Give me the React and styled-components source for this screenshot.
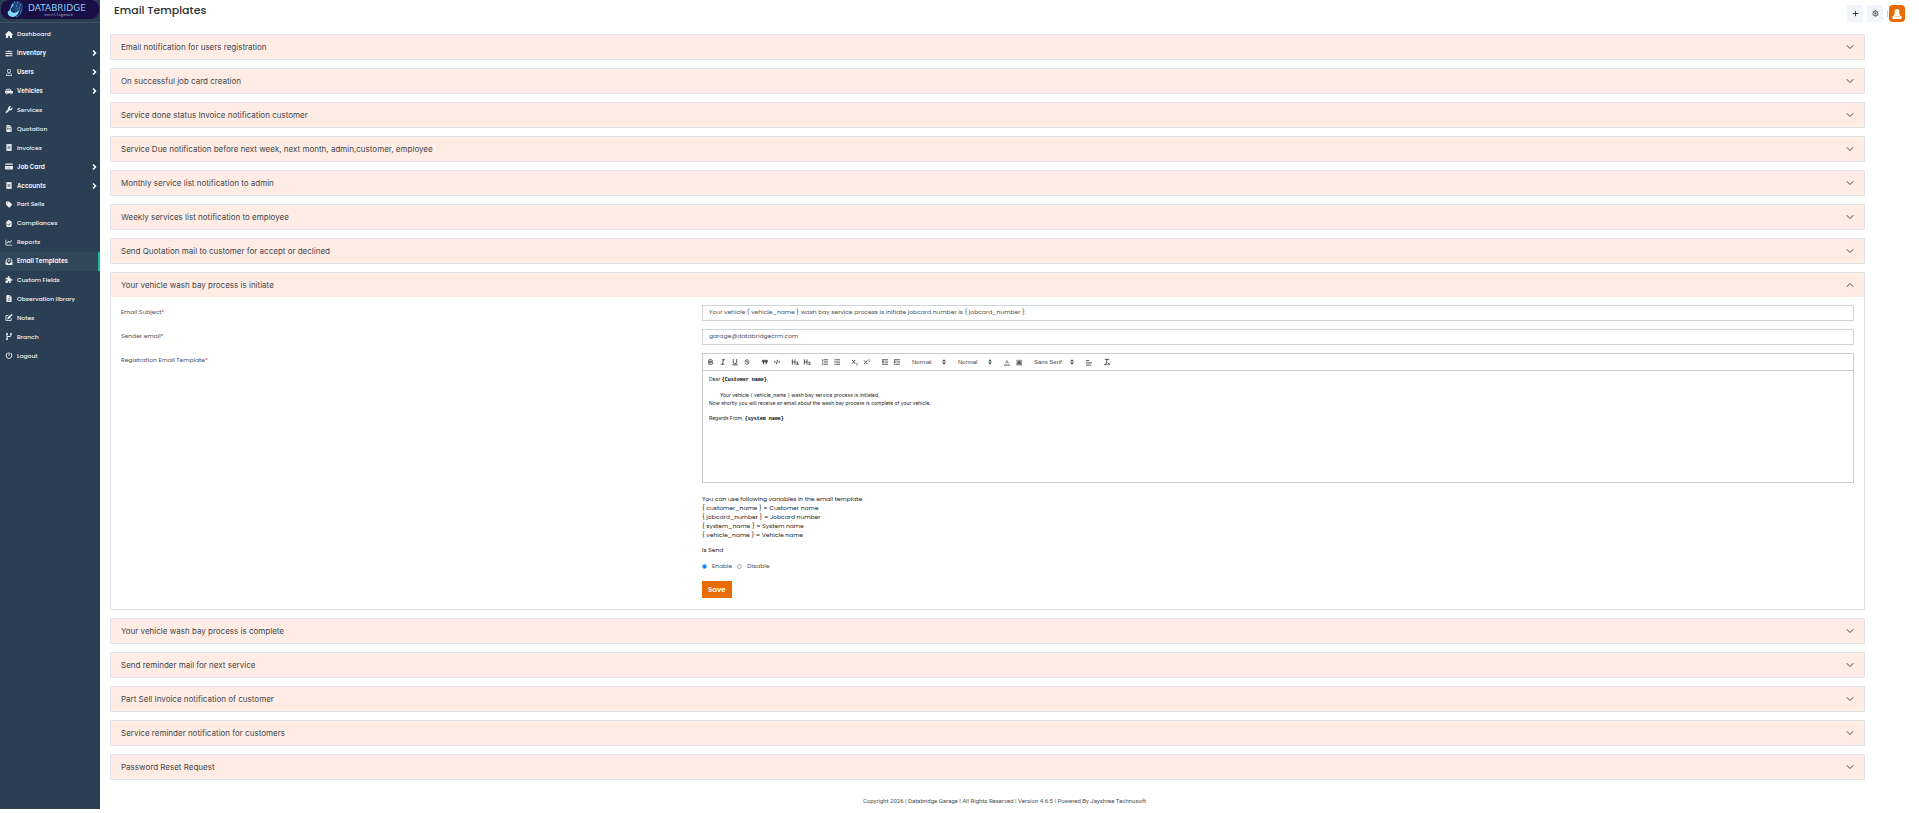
import React from "react";
import styled, { createGlobalStyle } from "styled-components";
import {
    FaHouse, FaCarSide, FaWrench, FaFileInvoice, FaReceipt, FaCreditCard, FaTag,
    FaClipboardCheck, FaChartLine, FaEnvelopeOpenText, FaPuzzlePiece, FaFileLines,
    FaPenToSquare, FaCodeBranch, FaPowerOff, FaPlus
} from "react-icons/fa6";
import { FaRegUser, FaSlidersH } from "react-icons/fa";

const colors = {
    sidebar: "#2a3f54",
    sidebarActive: "#31485a",
    teal: "#1abb9c",
    peach: "#ffede5",
    border: "#dee2e6",
    inputBorder: "#ced4da",
    editorBorder: "#cccccc",
    orange: "#ea6b00",
    text: "#495057"
};

const GlobalStyle = createGlobalStyle`
    * {
        box-sizing: border-box;
    }
    body {
        margin: 0;
        background: #fff;
        color: ${colors.text};
        font-family: Poppins, Inter, "Open Sans", sans-serif;
        font-size: 6px;
        line-height: 8px;
    }
    button, input, select {
        font: inherit;
        color: inherit;
    }
`;

const Page = styled.div`
    display: flex;
    margin-bottom: 4px;
`;

const Sidebar = styled.aside`
    width: 100px;
    flex: none;
    background: ${colors.sidebar};
`;

const Brand = styled.a`
    display: block;
    height: 23px;
    border-bottom: 1px solid #3f5265;
    svg {
        display: block;
    }
`;

const Menu = styled.ul`
    list-style: none;
    margin: 2px 0 0;
    padding: 0;
    display: grid;
    grid-auto-rows: 1fr;
    height: 340px;
`;

const MenuLink = styled.a`
    display: flex;
    align-items: center;
    gap: 4px;
    height: 100%;
    padding: 0 1px 0 5px;
    color: #f0f3f6;
    background: ${({ $active }) => ($active ? colors.sidebarActive : "transparent")};
    border-right: 2px solid ${({ $active }) => ($active ? colors.teal : "transparent")};
    font-weight: ${({ $strong }) => ($strong ? 600 : 500)};
    text-decoration: none;
    svg {
        width: 8px;
        height: 7px;
        flex: none;
    }
    span {
        flex: 1;
        white-space: nowrap;
    }
`;

const Caret = styled.svg`
    && {
        width: 6px;
        height: 6px;
    }
    fill: none;
    stroke: #fff;
    stroke-width: 3;
`;

const Main = styled.div`
    flex: 1;
    min-width: 0;
    padding: 0 54px 0 10px;
`;

const TopBar = styled.header`
    display: flex;
    justify-content: space-between;
    height: 34px;
    margin-right: -40px;
    padding-left: 4px;
`;

const Title = styled.h1`
    margin: 3px 0 0;
    color: #2b2f33;
    font-size: 11px;
    font-weight: 500;
    line-height: 14px;
`;

const Actions = styled.div`
    display: flex;
    align-items: flex-start;
    gap: 4px;
    padding-top: 5px;
`;

const IconButton = styled.button`
    display: flex;
    align-items: center;
    justify-content: center;
    width: 16px;
    height: 17px;
    padding: 0;
    border: 0;
    background: #f2f5fa;
    color: #333;
    svg {
        width: 7px;
        height: 7px;
    }
`;

const Profile = styled.div`
    display: flex;
    align-items: center;
    gap: 1px;
`;

const Divider = styled.span`
    width: 1px;
    height: 6px;
    background: #ccc;
`;

const ProfileButton = styled(IconButton)`
    border-radius: 4px;
    background: ${colors.orange};
    svg {
        width: 12px;
        height: 12px;
    }
`;

const Accordion = styled.main`
    display: flex;
    flex-direction: column;
    gap: 8px;
`;

const Card = styled.section`
    border: 1px solid ${colors.border};
    border-radius: 1px;
`;

const CardHeader = styled.button`
    display: flex;
    align-items: center;
    justify-content: space-between;
    width: 100%;
    height: 24px;
    padding: 0 10px;
    border: 0;
    background: ${colors.peach};
    color: #3f454b;
    font-family: Inter, "Open Sans", sans-serif;
    font-size: 8px;
    text-align: left;
    svg {
        width: 8px;
        height: 8px;
        transform: ${({ $open }) => ($open ? "rotate(180deg)" : "none")};
    }
`;

const CardBody = styled.form`
    display: grid;
    gap: 8px;
    padding: 8px 10px 11px;
`;

const FormRow = styled.div`
    display: grid;
    grid-template-columns: 1fr 2fr;
    column-gap: 5px;
    align-items: start;
`;

const Label = styled.label`
    padding-top: 3px;
    i {
        color: #e05050;
        font-style: normal;
    }
`;

const TextInput = styled.input`
    width: 100%;
    height: 16px;
    padding: 0 6px 1px;
    border: 1px solid ${colors.inputBorder};
    border-radius: 0;
    background: #fff;
    outline: none;
`;

const Toolbar = styled.div`
    display: flex;
    align-items: center;
    gap: 6px;
    height: 18px;
    padding: 0 2px;
    border: 1px solid ${colors.editorBorder};
    color: #444;
`;

const ToolGroup = styled.div`
    display: flex;
`;

const ToolButton = styled.button`
    display: flex;
    align-items: center;
    justify-content: center;
    width: 12px;
    height: 12px;
    padding: 0;
    border: 0;
    background: none;
`;

const Glyph = styled.svg`
    display: block;
    width: 8px;
    height: 8px;
    flex: none;
    fill: none;
    stroke: currentColor;
    stroke-width: 2;
    stroke-linecap: round;
    stroke-linejoin: round;
    .f {
        fill: currentColor;
        stroke: none;
    }
    .thin {
        stroke-width: 1;
    }
`;

const Picker = styled.span`
    display: flex;
    align-items: center;
    width: ${({ $wide }) => ($wide ? "46px" : "40px")};
    padding: 0 1px 0 3px;
    select {
        flex: 1;
        min-width: 0;
        padding: 0;
        border: 0;
        background: none;
        appearance: none;
        font-family: "Liberation Sans", Arial, sans-serif;
        font-weight: 500;
    }
`;

const Editor = styled.div`
    height: 112px;
    padding: 4px 6px;
    border: 1px solid ${colors.editorBorder};
    border-top: 0;
    color: #222;
    font-family: Inter, "Liberation Sans", sans-serif;
    font-size: 5px;
    line-height: 8px;
    outline: none;
    p {
        margin: 0 0 7px;
    }
    strong {
        color: #000;
        font-family: "Liberation Mono", monospace;
    }
`;

const Indent = styled.span`
    padding-left: 11px;
`;

const Variables = styled.div`
    margin-top: 12px;
    color: #212529;
    line-height: 9px;
`;

const SendField = styled.fieldset`
    margin: 6px 0 0;
    padding: 0;
    border: 0;
    legend {
        padding: 0;
        color: #212529;
    }
`;

const Radios = styled.div`
    display: flex;
    gap: 5px;
    padding-top: 8px;
    label {
        display: flex;
        align-items: center;
        gap: 5px;
    }
`;

const Radio = styled.input`
    width: 5px;
    height: 5px;
    margin: 0;
    appearance: none;
    border: 1px solid #aaa;
    border-radius: 50%;
    &:checked {
        border-color: #7ab8f5;
        background: #0075ff;
    }
`;

const SaveButton = styled.button`
    display: block;
    height: 17px;
    margin-top: 11px;
    padding: 0 6px;
    border: 0;
    background: ${colors.orange};
    color: #fff;
    font-size: 7px;
    font-weight: 600;
`;

const Footer = styled.footer`
    padding: 17px 0 4px;
    margin: 0 -44px 0 -10px;
    font-family: Roboto, sans-serif;
    text-align: center;
`;

const menu = [
    { name: "Dashboard", icon: FaHouse },
    { name: "Inventory", icon: FaSlidersH, nested: true },
    { name: "Users", icon: FaRegUser, nested: true },
    { name: "Vehicles", icon: FaCarSide, nested: true },
    { name: "Services", icon: FaWrench },
    { name: "Quotation", icon: FaFileInvoice },
    { name: "Invoices", icon: FaReceipt },
    { name: "Job Card", icon: FaCreditCard, nested: true },
    { name: "Accounts", icon: FaReceipt, nested: true },
    { name: "Part Sells", icon: FaTag },
    { name: "Compliances", icon: FaClipboardCheck },
    { name: "Reports", icon: FaChartLine },
    { name: "Email Templates", icon: FaEnvelopeOpenText, active: true },
    { name: "Custom Fields", icon: FaPuzzlePiece },
    { name: "Observation library", icon: FaFileLines },
    { name: "Notes", icon: FaPenToSquare },
    { name: "Branch", icon: FaCodeBranch },
    { name: "Logout", icon: FaPowerOff }
];

const before = [
    "Email notification for users registration",
    "On successful job card creation",
    "Service done status Invoice notification customer",
    "Service Due notification before next week, next month, admin,customer, employee",
    "Monthly service list notification to admin",
    "Weekly services list notification to employee",
    "Send Quotation mail to customer for accept or declined"
];

const after = [
    "Your vehicle wash bay process is complete",
    "Send reminder mail for next service",
    "Part Sell Invoice notification of customer",
    "Service reminder notification for customers",
    "Password Reset Request"
];

const glyphs = {
    bold: <><path d="M5,4H9.5A2.5,2.5,0,0,1,12,6.5v0A2.5,2.5,0,0,1,9.5,9H5Z" /><path d="M5,9h5.5A2.5,2.5,0,0,1,13,11.5v0A2.5,2.5,0,0,1,10.5,14H5Z" /></>,
    italic: <path d="M7 4h6M5 14h6M8 14l2-10" />,
    underline: <path d="M5,3V9a4.012,4.012,0,0,0,4,4H9a4.012,4.012,0,0,0,4-4V3M3.5 15.5h11" />,
    strike: <><path className="thin" d="M15.5 8.5h-13" /><path d="M12.5 5.5C11.5 3.5 6 3 5.5 6c0 2 2 2 3.5 2.7c3 .8 3.5 1.5 3.5 3c0 3-6 3-7.5.5" /></>,
    quote: <><path className="f" d="M4 5h4v4l-2 5H4l1-4H4zM10 5h4v4l-2 5h-2l1-4h-1z" /><path d="M4 5h3v4H4zM11 5h3v4h-3z" /></>,
    code: <path d="M5 7 3 9l2 2M13 7l2 2-2 2M10 5 8 13" />,
    h1: <><path d="M3 4v10M9 4v10M3 9h6" /><path d="M13 9.5l1.5-1V14M12.5 14h4" /></>,
    h2: <><path d="M3 4v10M9 4v10M3 9h6" /><path d="M12.5 9.5c1-2 4-1 3 1l-3 3.5h4" /></>,
    ordered: <><path d="M7 4h8M7 9h8M7 14h8" /><path className="thin" d="M2.5 3.5 3.5 3v3M2.5 6h2M2.5 9h2l-2 2.5h2M2.5 13.5h2v2h-2" /></>,
    bullet: <path d="M6 4h9M6 9h9M6 14h9M3 4h0M3 9h0M3 14h0" />,
    sub: <><path d="M3 5l6 7M9 5l-6 7" /><path className="thin" d="M12 12c1-1.5 3-1 2.5.5L12 15.5h3" /></>,
    sup: <><path d="M3 6l6 7M9 6l-6 7" /><path className="thin" d="M12 4c1-1.5 3-1 2.5.5L12 7.5h3" /></>,
    outdent: <path d="M3 14h12M3 4h12M9 9h6M5 7v4L3 9z" />,
    indent: <path d="M3 14h12M3 4h12M9 9h6M3 7v4l2-2z" />,
    color: <><path className="thin" d="M6 12 9 5l3 7M7 10h4" /><path d="M3 16h12" /></>,
    background: <><path className="f" opacity="0.5" d="M3 4h13v13H3z" /><path d="M6 14l3.500-7L13 14M7 12h5" /></>,
    align: <path d="M3 11h12M3 16h10M3 6h6" />,
    clean: <path d="M5 3h8M9 3 7 13M3 15h5M11 11l4 4M15 11l-4 4" />,
    arrows: <path className="f" d="M5 8h8L9 3zM5 10h8l-4 5z" />
};

const Tool = ({ name }) => (
    <ToolButton type="button" aria-label={name}>
        <Glyph viewBox="0 0 18 18">{glyphs[name]}</Glyph>
    </ToolButton>
);

const Tools = ({ names }) => (
    <ToolGroup>
        {names.map((name) => <Tool key={name} name={name} />)}
    </ToolGroup>
);

const FormatPicker = ({ label, value, wide }) => (
    <Picker $wide={wide}>
        <select aria-label={label} defaultValue={value}>
            <option>{value}</option>
        </select>
        <Glyph viewBox="0 0 18 18">{glyphs.arrows}</Glyph>
    </Picker>
);

const Chevron = () => (
    <svg viewBox="0 0 16 16" fill="none" stroke="#444" strokeWidth="2" strokeLinecap="round" strokeLinejoin="round">
        <path d="M2 5l6 6 6-6" />
    </svg>
);

const GearIcon = () => (
    <svg viewBox="0 0 14 14" fill="none" stroke="#666" strokeWidth="2">
        <circle cx="7" cy="7" r="5" />
        <circle cx="7" cy="7" r="1" />
        <path d="M7 0v14M1 3.500l12 7M13 3.500l-12 7" strokeWidth="1" />
    </svg>
);

const Avatar = () => (
    <svg viewBox="0 0 12 12" fill="#fff">
        <path d="M6 1a2.500 2.500 0 0 1 2 4l1.500 3H10.500V11h-9V8H2.500L4 5a2.500 2.500 0 0 1 2-4z" />
        <path d="M3 8.500h6" stroke="#f6c9a0" strokeWidth="1" />
    </svg>
);

const Logo = () => (
    <svg width="100" height="20" viewBox="0 0 100 20" role="img" aria-label="Databridge Intelligence">
        <rect x="1" y="0" width="98" height="19" rx="8" fill="#1a0f45" />
        <circle cx="17" cy="7" r="6" fill="#1d4379" />
        <path d="M13 3c2 3-4 5-2 8s6 2 8-1c0 4-3 7-6 7-4 0-6-3-5-6 2 1 2-4 5-8z" fill="#7fdcf5" />
        <path d="M14 2h1M17 3h1M20 5h1M16 6h1M19 8h1M21 10h1M17 9h1" stroke="#57b9e8" />
        <path d="M21 11c0 3-2 5-5 6" stroke="#2c7fc4" fill="none" />
        <text x="28" y="11" fill="#86cdf0" fontFamily="DejaVu Sans, sans-serif" fontSize="9">DATABRIDGE</text>
        <text x="44" y="16" fill="#b9b3d3" fontFamily="Liberation Mono, monospace" fontSize="4">Intelligence</text>
    </svg>
);

const TemplateCard = ({ title, children }) => (
    <Card>
        <CardHeader type="button" $open={!!children} aria-expanded={!!children}>
            {title}
            <Chevron />
        </CardHeader>
        {children}
    </Card>
);

const TemplateForm = () => (
    <CardBody>
        <FormRow>
            <Label htmlFor="subject">Email Subject<i>*</i></Label>
            <TextInput id="subject" defaultValue="Your vehicle { vehicle_name } wash bay service process is initiate jobcard number is { jobcard_number }." />
        </FormRow>
        <FormRow>
            <Label htmlFor="sender">Sender email<i>*</i></Label>
            <TextInput id="sender" type="email" defaultValue="garage@databridgecrm.com" />
        </FormRow>
        <FormRow>
            <Label as="span" id="template">Registration Email Template<i>*</i></Label>
            <div>
                <Toolbar role="toolbar">
                    <Tools names={["bold", "italic", "underline", "strike"]} />
                    <Tools names={["quote", "code"]} />
                    <Tools names={["h1", "h2"]} />
                    <Tools names={["ordered", "bullet"]} />
                    <Tools names={["sub", "sup"]} />
                    <Tools names={["outdent", "indent"]} />
                    <FormatPicker label="Size" value="Normal" />
                    <FormatPicker label="Heading" value="Normal" />
                    <Tools names={["color", "background"]} />
                    <FormatPicker label="Font" value="Sans Serif" wide />
                    <Tools names={["align"]} />
                    <Tools names={["clean"]} />
                </Toolbar>
                <Editor contentEditable suppressContentEditableWarning role="textbox" aria-labelledby="template">
                    <p>Dear <strong>{"{Customer name}"}</strong>,</p>
                    <p>
                        <Indent>{"Your vehicle { vehicle_name } wash bay service process is initiated."}</Indent>
                        <br />
                        Now shortly you will receive an email about the wash bay process is complete of your vehicle.
                    </p>
                    <p>Regards From, <strong>{"{system name}"}</strong></p>
                </Editor>
                <Variables>
                    You can use following variables in the email template<br />
                    {"{ customer_name } = Customer name"}<br />
                    {"{ jobcard_number } = Jobcard number"}<br />
                    {"{ system_name } = System name"}<br />
                    {"{ vehicle_name } = Vehicle name"}
                </Variables>
                <SendField>
                    <legend>Is Send</legend>
                    <Radios>
                        <label><Radio type="radio" name="send" defaultChecked />Enable</label>
                        <label><Radio type="radio" name="send" />Disable</label>
                    </Radios>
                </SendField>
                <SaveButton type="button">Save</SaveButton>
            </div>
        </FormRow>
    </CardBody>
);

const App = () => (
    <>
        <GlobalStyle />
        <Page>
            <Sidebar>
                <Brand href="#"><Logo /></Brand>
                <nav>
                    <Menu>
                        {menu.map(({ name, icon: Icon, nested, active }) => (
                            <li key={name}>
                                <MenuLink href="#" $active={active} $strong={active || nested}>
                                    <Icon />
                                    <span>{name}</span>
                                    {nested && <Caret viewBox="0 0 12 12"><path d="M4 1l5 5-5 5" /></Caret>}
                                </MenuLink>
                            </li>
                        ))}
                    </Menu>
                </nav>
            </Sidebar>
            <Main>
                <TopBar>
                    <Title>Email Templates</Title>
                    <Actions>
                        <IconButton type="button" aria-label="Add"><FaPlus /></IconButton>
                        <IconButton type="button" aria-label="Settings"><GearIcon /></IconButton>
                        <Profile>
                            <Divider />
                            <ProfileButton type="button" aria-label="Profile"><Avatar /></ProfileButton>
                        </Profile>
                    </Actions>
                </TopBar>
                <Accordion>
                    {before.map((title) => <TemplateCard key={title} title={title} />)}
                    <TemplateCard title="Your vehicle wash bay process is initiate">
                        <TemplateForm />
                    </TemplateCard>
                    {after.map((title) => <TemplateCard key={title} title={title} />)}
                </Accordion>
                <Footer>Copyright 2026 | Databridge Garage | All Rights Reserved | Version 4.6.5 | Powered By Jayshree Technosoft</Footer>
            </Main>
        </Page>
    </>
);

export default App;
